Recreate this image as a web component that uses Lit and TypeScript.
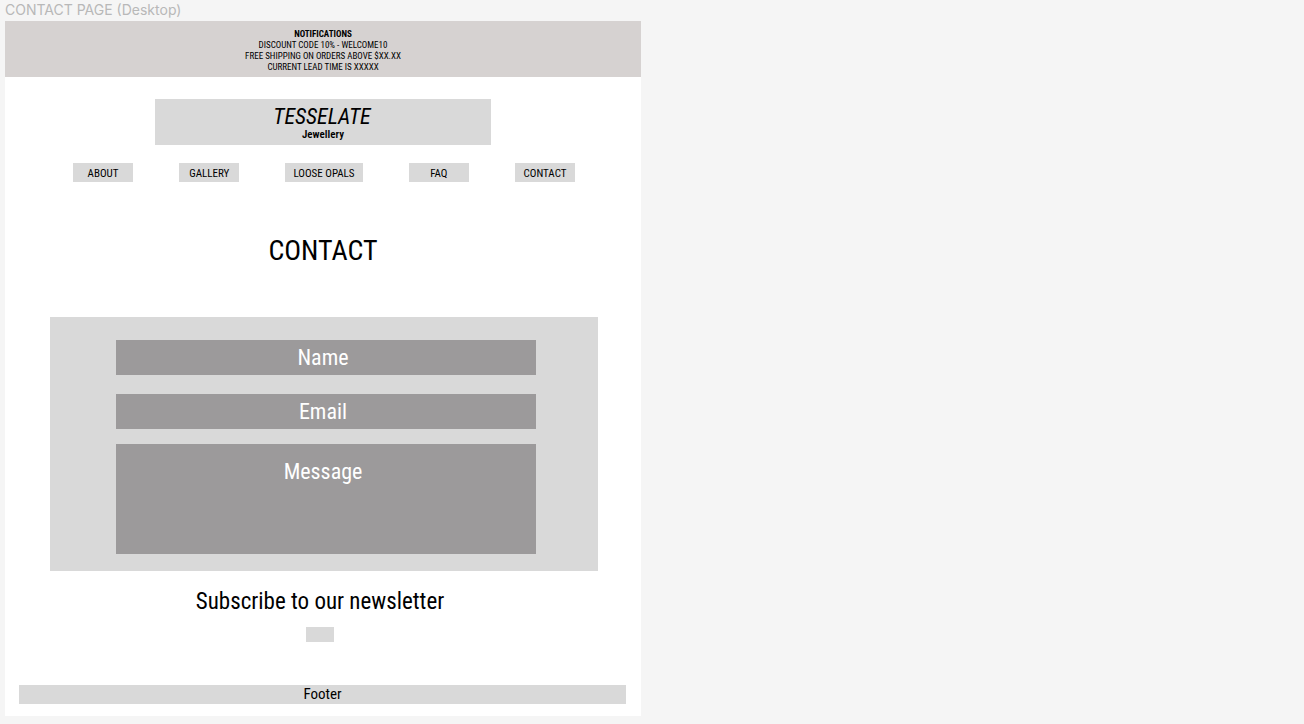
import { LitElement, html, css } from "lit";
import { customElement } from "lit/decorators.js";

const NOTICES = [
  "DISCOUNT CODE 10% - WELCOME10",
  "FREE SHIPPING ON ORDERS ABOVE $XX.XX",
  "CURRENT LEAD TIME IS XXXXX",
];

const LINKS = ["ABOUT", "GALLERY", "LOOSE OPALS", "FAQ", "CONTACT"];

@customElement("site-header")
export class SiteHeader extends LitElement {
  static styles = css`
    :host {
      display: block;
      text-align: center;
    }
    .notice {
      padding: 8px 16px 4px;
      background: #d6d2d1;
      font-size: 9px;
      line-height: 11px;
    }
    .notice p,
    .notice h2 {
      margin: 0;
      font-size: 9px;
    }
    .notice h2 {
      font-weight: 700;
    }
    .brand {
      margin: 22px 150px 0;
      padding: 6px 0 4px;
      background: #d9d9d9;
    }
    .name {
      margin: 0;
      padding-right: 2px;
      font-size: 22px;
      line-height: 24px;
      font-style: italic;
    }
    .tag {
      margin: 0;
      font-size: 11px;
      line-height: 12px;
      font-weight: 600;
    }
    nav {
      display: flex;
      justify-content: space-between;
      gap: 8px;
      margin-top: 18px;
      padding: 0 66px 0 68px;
    }
    nav a {
      box-sizing: border-box;
      min-width: 60px;
      padding: 2px 8px 0;
      background: #d9d9d9;
      color: #000;
      font-size: 11px;
      line-height: 17px;
      text-decoration: none;
      white-space: nowrap;
    }
  `;

  render() {
    return html`
      <section class="notice">
        <h2>NOTIFICATIONS</h2>
        ${NOTICES.map((n) => html`<p>${n}</p>`)}
      </section>
      <div class="brand">
        <p class="name">TESSELATE</p>
        <p class="tag">Jewellery</p>
      </div>
      <nav>${LINKS.map((l) => html`<a href="#">${l}</a>`)}</nav>
    `;
  }
}

@customElement("contact-form")
export class ContactForm extends LitElement {
  static styles = css`
    :host {
      display: block;
    }
    form {
      display: flex;
      flex-direction: column;
      padding: 23px 62px 17px 66px;
      background: #d9d9d9;
    }
    .field {
      display: grid;
      margin-bottom: 19px;
    }
    .field.email {
      margin-bottom: 15px;
    }
    .field.message {
      margin-bottom: 0;
    }
    .field > * {
      grid-area: 1 / 1;
    }
    label {
      z-index: 1;
      padding: 5px 6px 0 0;
      color: #fff;
      font-size: 22px;
      line-height: 26px;
      text-align: center;
      pointer-events: none;
    }
    .message label {
      padding-top: 15px;
    }
    input,
    textarea {
      box-sizing: border-box;
      width: 100%;
      height: 35px;
      margin: 0;
      padding: 4px 8px;
      border: 0;
      border-radius: 0;
      background: #9c9a9b;
      color: #fff;
      font: inherit;
      font-size: 22px;
      resize: none;
    }
    textarea {
      display: block;
      height: 110px;
    }
  `;

  render() {
    return html`
      <form>
        <div class="field">
          <label for="name">Name</label>
          <input id="name" type="text" />
        </div>
        <div class="field email">
          <label for="email">Email</label>
          <input id="email" type="email" />
        </div>
        <div class="field message">
          <label for="message">Message</label>
          <textarea id="message"></textarea>
        </div>
      </form>
    `;
  }
}

@customElement("app-root")
export class AppRoot extends LitElement {
  static styles = css`
    :host {
      display: grid;
      grid-template-columns: 1fr 1fr;
      box-sizing: border-box;
      min-height: 100vh;
      background: #f5f5f5;
      color: #000;
      font-family: "Roboto Condensed", Roboto, "Noto Sans", sans-serif;
    }
    .board {
      padding: 0 11px 8px 5px;
    }
    .board-name {
      padding-bottom: 1px;
      color: #b8b8b8;
      font-family: Inter, sans-serif;
      font-size: 14px;
      line-height: 20px;
    }
    .page {
      background: #fff;
      padding-bottom: 12px;
      text-align: center;
    }
    h1 {
      margin: 53px 0 50px;
      font-size: 28px;
      line-height: 32px;
      font-weight: 400;
    }
    contact-form {
      margin: 0 43px 0 45px;
    }
    .newsletter {
      display: flex;
      flex-direction: column;
      align-items: center;
      padding: 18px 6px 0 0;
    }
    h2 {
      margin: 0 0 12px;
      font-size: 23px;
      line-height: 26px;
      font-weight: 400;
    }
    .subscribe {
      width: 28px;
      height: 15px;
      padding: 0;
      border: 0;
      background: #d9d9d9;
    }
    footer {
      margin: 43px 15px 0 14px;
      background: #d9d9d9;
      font-size: 15px;
      line-height: 19px;
    }
  `;

  render() {
    return html`
      <div class="board">
        <div class="board-name">CONTACT PAGE (Desktop)</div>
        <div class="page">
          <site-header></site-header>
          <main>
            <h1>CONTACT</h1>
            <contact-form></contact-form>
            <section class="newsletter">
              <h2>Subscribe to our newsletter</h2>
              <button class="subscribe" type="button" aria-label="Subscribe"></button>
            </section>
          </main>
          <footer>Footer</footer>
        </div>
      </div>
    `;
  }
}
